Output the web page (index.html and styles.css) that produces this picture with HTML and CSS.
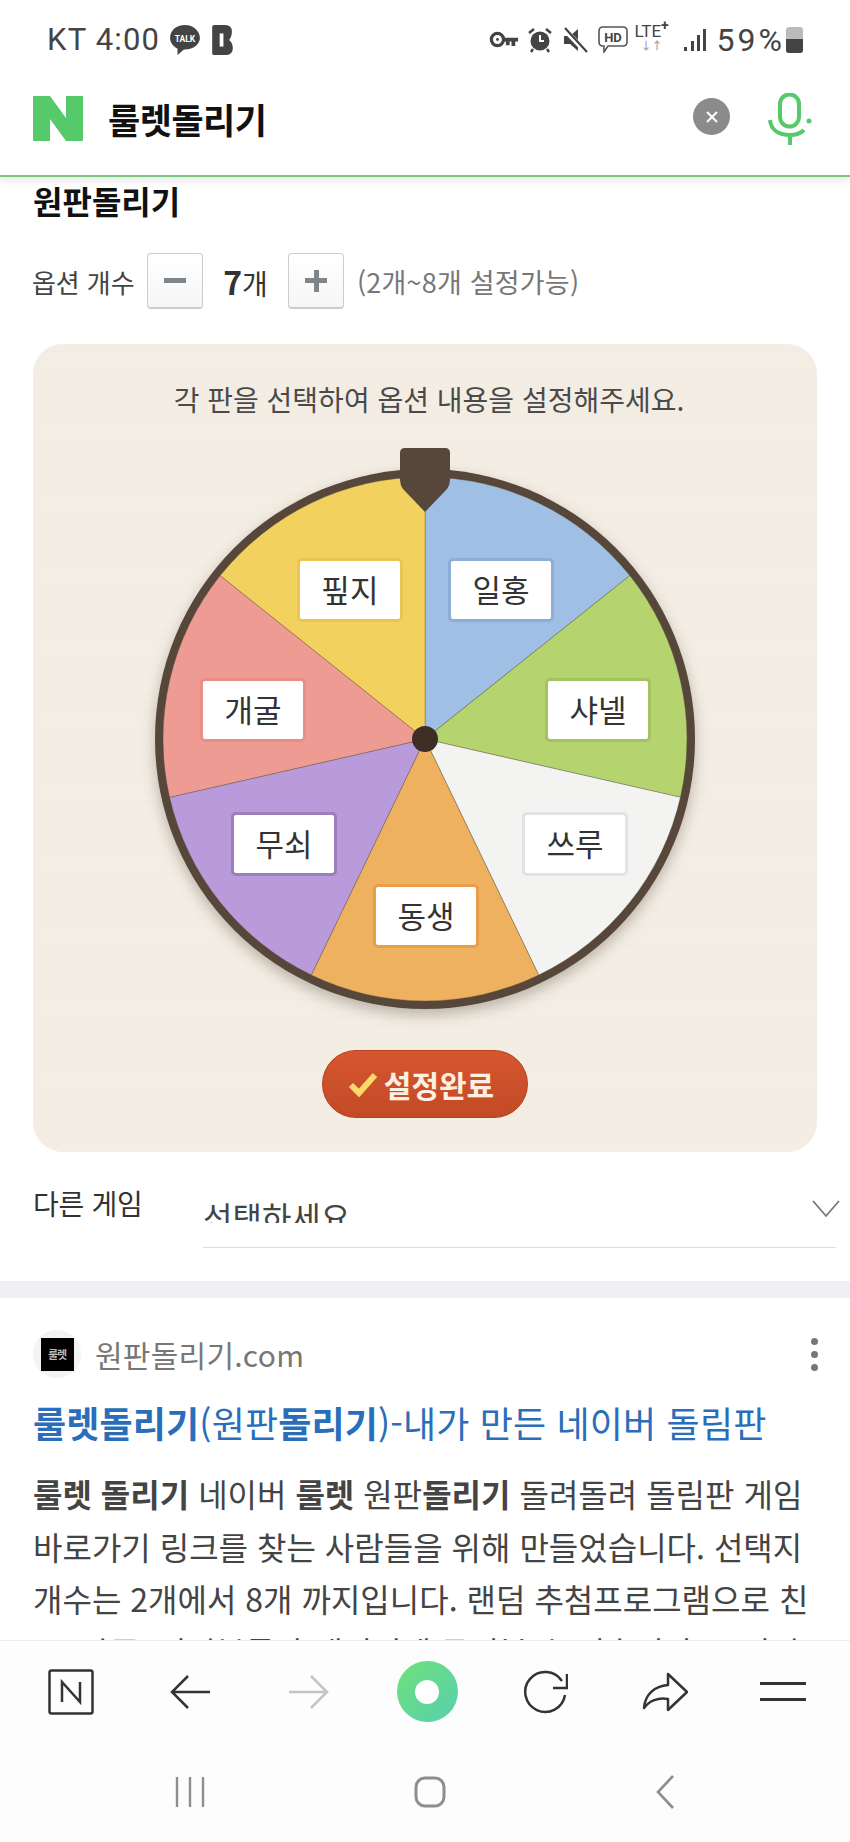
FILE: index.html
```html
<!DOCTYPE html>
<html lang="ko">
<head>
  <meta charset="UTF-8">
  <title>룰렛돌리기</title>
  <link rel="stylesheet" href="styles.css">
</head>
<body>
  <div class="phone">
    <div class="status-bar">
      <div class="status-left">
        <span class="clock">KT 4:00</span>
        <svg class="ico-talk" viewBox="0 0 30 30"><path d="M15 1C7 1 1 6 1 13c0 4.500 2.700 8 7 10.200L8 29l6-5h1c8 0 14-5 14-11S23 1 15 1z" fill="#444"/><text x="15" y="16.500" class="talk-txt">TALK</text></svg>
        <svg class="ico-b" viewBox="0 0 22 32"><path d="M0 2q0-2 2-2h12q7 0 7 7 0 6-3 9 4 3 4 9 0 7-8 7H2q-2 0-2-2z" fill="#444"/><rect x="8" y="9" width="4" height="14" fill="#fff"/></svg>
      </div>
      <div class="status-right">
        <svg class="ico-key" viewBox="0 0 32 20"><circle cx="9" cy="10" r="6.500" fill="none" stroke="#444" stroke-width="3.500"/><circle cx="9" cy="10" r="1.500" fill="#444"/><path d="M15 8h16v4h-3v5h-4v-5h-2v4h-4v-4h-3z" fill="#444"/></svg>
        <svg class="ico-alarm" viewBox="0 0 26 26"><circle cx="13" cy="14" r="9.500" fill="#444"/><path d="M13 8v6h4" fill="none" stroke="#fff" stroke-width="2"/><path d="M2 6l5-4M24 6l-5-4M6 22l-2 3M20 22l2 3" stroke="#444" stroke-width="2.500"/></svg>
        <svg class="ico-mute" viewBox="0 0 26 26"><path d="M2 9h6l8-7v22l-8-7H2z" fill="#444"/><path d="M2 2l22 23" stroke="#fff" stroke-width="5"/><path d="M3 1l22 24" stroke="#444" stroke-width="2.200"/></svg>
        <svg class="ico-hd" viewBox="0 0 30 27"><path d="M5 1h20q4 0 4 4v11q0 4-4 4H10l-4 6v-6H5q-4 0-4-4V5q0-4 4-4z" fill="none" stroke="#555" stroke-width="1.600"/><text x="15" y="16" class="hd-txt">HD</text></svg>
        <div class="lte">
          <span class="lte-txt">LTE<sup>+</sup></span>
          <span class="lte-arrows">↓↑</span>
        </div>
        <svg class="ico-signal" viewBox="0 0 24 24"><path d="M1 19h3v4H1zM8 13h3v10H8zM14 7h3v16h-3zM20 1h3v22h-3z" fill="#444"/></svg>
        <span class="batt-pct">59%</span>
        <div class="battery"><div class="battery-fill"></div></div>
      </div>
    </div>

    <header class="search-bar">
      <svg class="logo-n" viewBox="0 0 50 45"><path d="M0 0h17l16 22V0h17v45H33L17 23v22H0z" fill="#56c96b"/></svg>
      <div class="query">룰렛돌리기</div>
      <div class="clear-btn">
        <svg viewBox="0 0 16 16"><path d="M3 3l10 10M13 3L3 13" stroke="#fff" stroke-width="2"/></svg>
      </div>
      <svg class="mic" viewBox="0 0 44 52"><rect x="12" y="1.500" width="19" height="32" rx="9.500" fill="none" stroke="#56c96b" stroke-width="4"/><path d="M2 27c1 10 9 15 20 15 6 0 11-2 14-5" fill="none" stroke="#56c96b" stroke-width="4"/><circle cx="41" cy="28" r="2.500" fill="#56c96b"/><path d="M22 42v10" stroke="#56c96b" stroke-width="4"/></svg>
    </header>

    <main class="content">
      <section class="game">
        <h2 class="game-title">원판돌리기</h2>
        <div class="option-row">
          <span class="option-label">옵션 개수</span>
          <button class="step-btn"><span class="minus"></span></button>
          <span class="count"><b>7</b>개</span>
          <button class="step-btn"><span class="plus"></span></button>
          <span class="option-hint">(2개~8개 설정가능)</span>
        </div>

        <div class="board">
          <p class="board-msg">각 판을 선택하여 옵션 내용을 설정해주세요.</p>
          <div class="wheel">
            <svg class="wheel-svg" viewBox="0 0 560 560">
              <circle cx="280" cy="280" r="270" fill="#57463a"/>
              <path class="slice" d="M280 280V18A262 262 0 0 1 484.800 116.600z" fill="#a0bfe5"/>
              <path class="slice" d="M280 280L484.800 116.600A262 262 0 0 1 535.400 338.300z" fill="#b5d46f"/>
              <path class="slice" d="M280 280L535.400 338.300A262 262 0 0 1 393.700 516z" fill="#f3f3f2"/>
              <path class="slice" d="M280 280L393.700 516A262 262 0 0 1 166.300 516z" fill="#eeb15f"/>
              <path class="slice" d="M280 280L166.300 516A262 262 0 0 1 24.600 338.300z" fill="#b99bdb"/>
              <path class="slice" d="M280 280L24.600 338.300A262 262 0 0 1 75.200 116.600z" fill="#ee9c93"/>
              <path class="slice" d="M280 280L75.200 116.600A262 262 0 0 1 280 18z" fill="#f3d15e"/>
              <circle cx="280" cy="280" r="13" fill="#3d2f25"/>
            </svg>
            <svg class="pointer" viewBox="0 0 50 64"><path d="M5 0h40q5 0 5 5v27q0 5-3 9L25 64 3 41q-3-4-3-9V5q0-5 5-5z" fill="#57463a"/></svg>
            <div class="tag tag-blue">일홍</div>
            <div class="tag tag-green">샤넬</div>
            <div class="tag tag-white">쓰루</div>
            <div class="tag tag-orange">동생</div>
            <div class="tag tag-purple">무쇠</div>
            <div class="tag tag-red">개굴</div>
            <div class="tag tag-yellow">핖지</div>
          </div>
          <button class="done-btn">
            <svg viewBox="0 0 30 26"><path d="M3 14l8 8L27 4" fill="none" stroke="#f8d96a" stroke-width="6"/></svg>
            설정완료
          </button>
        </div>

        <div class="other-row">
          <span class="other-label">다른 게임</span>
          <div class="picker">
            <div class="picker-text">선택하세요</div>
            <svg class="picker-arrow" viewBox="0 0 28 18"><path d="M1 1l13 15L27 1" fill="none" stroke="#777" stroke-width="1.800"/></svg>
          </div>
        </div>
      </section>

      <div class="divider"></div>

      <section class="result">
        <div class="site-row">
          <div class="favicon"><div class="favicon-box">룰렛</div></div>
          <span class="site-name">원판돌리기.com</span>
          <div class="more"><i></i><i></i><i></i></div>
        </div>
        <a class="result-link"><b>룰렛돌리기</b>(원판<b>돌리기</b>)-내가 만든 네이버 돌림판</a>
        <p class="result-text"><b>룰렛 돌리기</b> 네이버 <b>룰렛</b> 원판<b>돌리기</b> 돌려돌려 돌림판 게임<br>바로가기 링크를 찾는 사람들을 위해 만들었습니다. 선택지<br>개수는 2개에서 8개 까지입니다. 랜덤 추첨프로그램으로 친<br>구, 가족, 지인분들과 재미있게 돌려볼 수 있습니다. 무엇인</p>
      </section>
    </main>

    <nav class="toolbar">
      <svg viewBox="0 0 46 46" class="tb-n"><rect x="1.500" y="1.500" width="43" height="43" rx="2" fill="none" stroke="#333" stroke-width="2.500"/><path d="M14 33V13l18 20V13" fill="none" stroke="#333" stroke-width="2.500"/></svg>
      <svg viewBox="0 0 40 36" class="tb-arrow"><path d="M18 2L2 18l16 16M2 18h38" fill="none" stroke="#333" stroke-width="2.500"/></svg>
      <svg viewBox="0 0 40 36" class="tb-arrow"><path d="M22 2l16 16-16 16M38 18H0" fill="none" stroke="#c4c4c4" stroke-width="2.500"/></svg>
      <div class="green-btn"><div class="green-dot"></div></div>
      <svg viewBox="0 0 44 44" class="tb-reload"><path d="M38 11A20 20 0 1 0 41 25" fill="none" stroke="#333" stroke-width="2.500"/><path d="M43 4V18H29" fill="none" stroke="#333" stroke-width="2.500"/></svg>
      <svg viewBox="0 0 46 40" class="tb-share"><path d="M26 2L45 20 26 38V27C16 25 7 29 2 36 3 22 13 14 26 13z" fill="none" stroke="#333" stroke-width="2.500" stroke-linejoin="round"/></svg>
      <div class="menu-lines"><i></i><i></i></div>
    </nav>

    <div class="sys-nav">
      <svg viewBox="0 0 30 32" class="sys-recent"><path d="M2 1v30M15 1v30M28 1v30" stroke="#8e8e8e" stroke-width="2.400"/></svg>
      <svg viewBox="0 0 32 32" class="sys-home"><rect x="2" y="2" width="28" height="28" rx="9" fill="none" stroke="#8e8e8e" stroke-width="3"/></svg>
      <svg viewBox="0 0 20 34" class="sys-back"><path d="M18 1L3 17l15 16" fill="none" stroke="#8e8e8e" stroke-width="2.600"/></svg>
    </div>
  </div>
</body>
</html>
```
FILE: styles.css
```css
:root {
  --green: #56c96b;
  --brown: #57463a;
  --text: #333;
  --font: "Noto Sans CJK KR", "Noto Sans", sans-serif;
}

* {
  box-sizing: border-box;
}

body {
  margin: 0;
  background: #fff;
  font-family: var(--font);
  color: var(--text);
}

.phone {
  width: 850px;
  height: 1842px;
  display: flex;
  flex-direction: column;
  overflow: hidden;
}

/* status bar */
.status-bar {
  height: 76px;
  flex: none;
  display: flex;
  justify-content: space-between;
  align-items: center;
  padding: 3px 47px 0 47px;
  color: #444;
  font-size: 31px;
  font-family: Roboto, var(--font);
}

.clock {
  letter-spacing: 1.2px;
}

.status-left {
  display: flex;
  align-items: center;
  gap: 9px;
}

.status-right {
  display: flex;
  align-items: center;
}

.ico-talk {
  width: 32px;
  height: 32px;
}

.talk-txt {
  font-size: 8px;
  fill: #fff;
  text-anchor: middle;
  font-weight: 700;
}

.ico-b {
  width: 23px;
  height: 30px;
  margin-left: 1px;
}

.ico-key {
  width: 30px;
  height: 19px;
}

.ico-alarm {
  width: 26px;
  height: 26px;
  margin-left: 8px;
}

.ico-mute {
  width: 26px;
  height: 26px;
  margin-left: 9px;
}

.ico-hd {
  width: 30px;
  height: 27px;
  margin-left: 10px;
}

.hd-txt {
  font-size: 13px;
  fill: #444;
  text-anchor: middle;
  font-weight: 700;
}

.lte {
  width: 40px;
  margin-left: 4px;
  display: flex;
  flex-direction: column;
  align-items: center;
  line-height: 1;
}

.lte-txt {
  font-size: 17px;
  margin-top: -4px;
}

.lte-txt sup {
  font-size: 14px;
  line-height: 0;
  font-weight: 700;
}

.lte-arrows {
  font-size: 11px;
  color: #aaa;
  font-weight: 700;
  margin-top: 1px;
}

.ico-signal {
  width: 24px;
  height: 24px;
  margin-left: 11px;
}

.batt-pct {
  margin-left: 10px;
  font-size: 32px;
  letter-spacing: 3px;
}

.battery {
  width: 17px;
  height: 26px;
  margin-left: 1px;
  background: #bbb;
  border-radius: 3px;
  overflow: hidden;
  display: flex;
  align-items: flex-end;
}

.battery-fill {
  width: 100%;
  height: 14px;
  background: #444;
}

/* search bar */
.search-bar {
  height: 101px;
  flex: none;
  display: flex;
  align-items: center;
  padding: 0 0 14px 33px;
  border-bottom: 2px solid #7cc77f;
  box-shadow: 0 4px 8px rgba(0, 0, 0, 0.09);
  background: #fff;
  position: relative;
  z-index: 2;
}

.logo-n {
  width: 50px;
  height: 45px;
}

.query {
  margin-left: 25px;
  font-size: 35px;
  font-weight: 700;
  color: #111;
  letter-spacing: -0.5px;
  flex: 1;
}

.clear-btn {
  width: 37px;
  height: 37px;
  margin-top: -4px;
  border-radius: 50%;
  background: #8b8b8b;
  display: flex;
  align-items: center;
  justify-content: center;
}

.clear-btn svg {
  width: 16px;
  height: 16px;
}

.mic {
  width: 44px;
  height: 52px;
  margin-left: 38px;
  margin-right: 38px;
}

/* main */
.content {
  flex: 1;
  min-height: 0;
  overflow: hidden;
}

.game {
  padding: 0 14px 0 33px;
  height: 1104px;
}

.game-title {
  margin: 0;
  font-size: 32px;
  font-weight: 700;
  color: #111;
  line-height: 46px;
}

.option-row {
  display: flex;
  align-items: center;
  margin-top: 30px;
  height: 56px;
}

.option-label {
  font-size: 26px;
  color: #444;
  letter-spacing: -0.1px;
  margin-left: -1px;
  width: 115px;
}

.step-btn {
  width: 56px;
  height: 56px;
  border: 1px solid #ccc;
  border-bottom-width: 2px;
  border-radius: 4px;
  background: linear-gradient(#fff, #f6f6f6);
  display: flex;
  align-items: center;
  justify-content: center;
  padding: 0;
}

.minus {
  width: 22px;
  height: 5px;
  background: #7e858b;
}

.plus {
  width: 22px;
  height: 22px;
  background: linear-gradient(#7e858b, #7e858b) center / 22px 5px no-repeat,
    linear-gradient(#7e858b, #7e858b) center / 5px 22px no-repeat;
}

.count {
  width: 85px;
  text-align: center;
  font-size: 28px;
  color: #333;
}

.count b {
  font-size: 32px;
}

.option-hint {
  margin-left: 13px;
  font-size: 27px;
  color: #777;
  letter-spacing: 0.2px;
}

.board {
  width: 784px;
  height: 808px;
  margin-top: 35px;
  border-radius: 30px;
  background: repeating-linear-gradient(#f3ede4 0, #f3ede4 6px, #f1ebe2 7px, #f3ede4 9px);
  display: flex;
  flex-direction: column;
  align-items: center;
}

.board-msg {
  margin: 36px 0 0 8px;
  font-size: 28px;
  line-height: 38px;
  color: #4a4a4a;
}

.wheel {
  position: relative;
  width: 560px;
  height: 560px;
  margin-top: 41px;
  flex: none;
}

.wheel-svg {
  width: 560px;
  height: 560px;
  display: block;
  filter: drop-shadow(0 6px 7px rgba(60, 45, 30, 0.3));
}

.slice {
  stroke: rgba(90, 80, 60, 0.35);
  stroke-width: 1;
}

.pointer {
  position: absolute;
  left: 255px;
  top: -11px;
  width: 50px;
  height: 64px;
}

.tag {
  position: absolute;
  width: 106px;
  height: 64px;
  background: #fff;
  border: 3px solid #ccc;
  border-radius: 5px;
  font-size: 31px;
  line-height: 56px;
  text-align: center;
  color: #333;
}

.tag-blue { left: 303px; top: 99px; border-color: #8eadd6; }
.tag-green { left: 400px; top: 219px; border-color: #a3c262; }
.tag-white { left: 377px; top: 353px; border-color: #e2e2e4; }
.tag-orange { left: 228px; top: 425px; border-color: #e99f4a; }
.tag-purple { left: 86px; top: 353px; border-color: #9a7fb8; }
.tag-red { left: 55px; top: 219px; border-color: #e88e86; }
.tag-yellow { left: 152px; top: 99px; border-color: #eac554; }

.done-btn {
  width: 206px;
  height: 68px;
  margin-top: 31px;
  border: 1px solid #b6431f;
  border-radius: 34px;
  background: linear-gradient(#d5562f, #c24a26);
  color: #fdf0e0;
  font-family: var(--font);
  font-size: 30px;
  font-weight: 700;
  display: flex;
  align-items: center;
  justify-content: center;
  gap: 6px;
  padding: 0 8px 0 0;
}

.done-btn svg {
  width: 30px;
  height: 26px;
}

.other-row {
  display: flex;
  margin-top: 35px;
}

.other-label {
  width: 170px;
  font-size: 28px;
  line-height: 33px;
  letter-spacing: -0.3px;
  color: #333;
}

.picker {
  position: relative;
  width: 633px;
  height: 61px;
  border-bottom: 1px solid #ddd;
}

.picker-text {
  height: 36px;
  overflow: hidden;
  font-size: 32px;
  line-height: 58px;
  color: #444;
}

.picker-arrow {
  position: absolute;
  right: -4px;
  top: 13px;
  width: 28px;
  height: 18px;
}

.divider {
  height: 17px;
  background: #f0eff2;
}

.result {
  padding: 31px 33px 0;
}

.site-row {
  display: flex;
  align-items: center;
  height: 50px;
}

.favicon {
  width: 48px;
  height: 48px;
  border-radius: 50%;
  background: #f3f3f3;
  display: flex;
  align-items: center;
  justify-content: center;
}

.favicon-box {
  width: 33px;
  height: 33px;
  background: #000;
  color: #bbb;
  font-size: 11px;
  font-weight: 700;
  line-height: 33px;
  text-align: center;
  letter-spacing: -1px;
}

.site-name {
  margin-left: 14px;
  font-size: 30px;
  color: #777;
  letter-spacing: 0.25px;
  flex: 1;
}

.more {
  display: flex;
  flex-direction: column;
  gap: 6px;
  width: 10px;
  margin-right: -4px;
}

.more i {
  width: 7px;
  height: 7px;
  border-radius: 50%;
  background: #777;
}

.result-link {
  display: block;
  margin-top: 19px;
  font-size: 36px;
  line-height: 48px;
  color: #2a6ebb;
  letter-spacing: 0.15px;
  white-space: nowrap;
}

.result-text {
  margin: 21px 0 0;
  font-size: 32px;
  line-height: 52.5px;
  color: #444;
  white-space: nowrap;
}

/* bottom bars */
.toolbar {
  height: 102px;
  flex: none;
  display: grid;
  grid-template-columns: repeat(7, 118.7px);
  justify-items: center;
  align-items: center;
  padding: 0 0 0 12px;
  background: #fdfdfd;
  border-top: 1px solid #eee;
}

.tb-n {
  width: 46px;
  height: 46px;
}

.tb-arrow {
  width: 40px;
  height: 36px;
}

.tb-reload {
  width: 44px;
  height: 44px;
}

.tb-share {
  width: 46px;
  height: 40px;
}

.green-btn {
  width: 61px;
  height: 61px;
  border-radius: 50%;
  background: linear-gradient(135deg, #6fe07a, #56d0b0);
  display: flex;
  align-items: center;
  justify-content: center;
}

.green-dot {
  width: 24px;
  height: 24px;
  border-radius: 50%;
  background: #fff;
}

.menu-lines {
  width: 46px;
  display: flex;
  flex-direction: column;
  gap: 13px;
}

.menu-lines i {
  height: 3px;
  background: #333;
}

.sys-nav {
  height: 100px;
  flex: none;
  display: flex;
  align-items: center;
  justify-content: space-between;
  padding: 0 175px;
  background: #fdfdfd;
}

.sys-recent {
  width: 30px;
  height: 32px;
}

.sys-home {
  width: 32px;
  height: 32px;
}

.sys-back {
  width: 20px;
  height: 34px;
}
```
